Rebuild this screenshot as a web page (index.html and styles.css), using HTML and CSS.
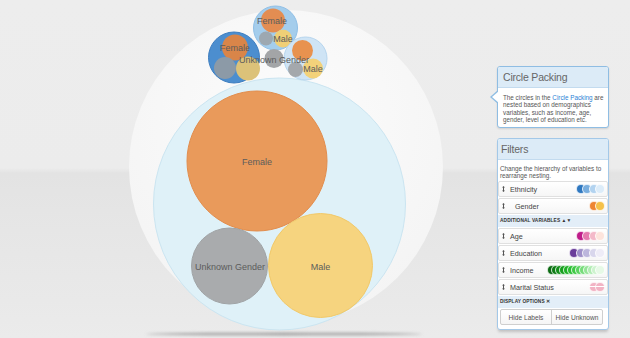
FILE: index.html
```html
<!DOCTYPE html>
<html>
<head>
<meta charset="utf-8">
<link rel="stylesheet" href="styles.css">
</head>
<body>
<div class="stage">
  <svg class="chart" width="490" height="338" viewBox="0 0 490 338">
    <defs>
      <radialGradient id="wg" cx="50%" cy="35%" r="65%">
        <stop offset="0" stop-color="#fcfcfc"/>
        <stop offset="1" stop-color="#f4f4f4"/>
      </radialGradient>
      <filter id="blur" x="-10%" y="-300%" width="120%" height="700%">
        <feGaussianBlur stdDeviation="1.4"/>
      </filter>
    </defs>
    <ellipse cx="284" cy="334" rx="138" ry="1.4" fill="#a0a0a0" filter="url(#blur)"/>
    <circle cx="286" cy="167" r="157" fill="url(#wg)"/>
    <circle cx="279.5" cy="204" r="126" fill="#dff1f8" stroke="#cbe5f1" stroke-width="1"/>
    <circle cx="257" cy="161" r="70" fill="#e99a5b" stroke="#e28d4d"/>
    <circle cx="229.5" cy="266" r="38" fill="#a9abad" stroke="#a0a3a5"/>
    <circle cx="320.5" cy="265.5" r="52" fill="#f6d47f" stroke="#f1c96a"/>

    <circle cx="234" cy="57.5" r="25.5" fill="#4c8ecf" stroke="#3d7dbf"/>
    <circle cx="235" cy="47.5" r="13" fill="#d98549"/>
    <circle cx="225" cy="68" r="11" fill="#8c9aa7"/>
    <circle cx="248" cy="68.5" r="12" fill="#dcc279"/>

    <circle cx="275.5" cy="28" r="22" fill="#a4cdec" stroke="#8fbfe6"/>
    <circle cx="273" cy="20.5" r="12" fill="#e38d52"/>
    <circle cx="266" cy="38.5" r="7" fill="#9da8b1"/>
    <circle cx="283" cy="38.5" r="9" fill="#f0cf76"/>

    <circle cx="274" cy="58.5" r="9.5" fill="#a3a5a7"/>

    <circle cx="305.5" cy="58.5" r="21.5" fill="#cfe4f5" stroke="#b6d5ee"/>
    <circle cx="302.5" cy="50.5" r="10.5" fill="#e8924f"/>
    <circle cx="295.5" cy="69.5" r="7.5" fill="#a4a8ac"/>
    <circle cx="313" cy="68.5" r="10" fill="#f3d27a"/>

    <g class="lbl">
      <text x="257" y="162">Female</text>
      <text x="230" y="267">Unknown Gender</text>
      <text x="320.5" y="267">Male</text>
      <text x="235" y="48">Female</text>
      <text x="272" y="21">Female</text>
      <text x="283" y="39">Male</text>
      <text x="274" y="60">Unknown Gender</text>
      <text x="313" y="69">Male</text>
    </g>
  </svg>

  <aside class="side">
    <div class="tip">
      <div class="tip-head">Circle Packing</div>
      <div class="tip-body">The circles in the <span class="link">Circle Packing</span> are<br>nested based on demographics<br>variables, such as income, age,<br>gender, level of education etc.</div>
    </div>

    <div class="filters">
      <div class="f-head">Filters</div>
      <div class="f-desc">Change the hierarchy of variables to<br>rearrange nesting.</div>

      <div class="row">
        <span class="grip"><svg width="3" height="6" viewBox="0 0 3 6"><path d="M1.5 0L3 1.6H0ZM1.5 6L0 4.4H3ZM1 1.5H2V4.5H1Z" fill="#555"/></svg></span>
        <span class="label">Ethnicity</span>
        <span class="sw">
          <i style="background:#2f78c0"></i><i style="background:#79aede"></i><i style="background:#b2d3f0"></i><i style="background:#dcecf9"></i>
        </span>
      </div>
      <div class="row">
        <span class="grip"><svg width="3" height="6" viewBox="0 0 3 6"><path d="M1.5 0L3 1.6H0ZM1.5 6L0 4.4H3ZM1 1.5H2V4.5H1Z" fill="#555"/></svg></span>
        <span class="label indent">Gender</span>
        <span class="sw">
          <i style="background:#ee8532"></i><i style="background:#f5c14a"></i>
        </span>
      </div>

      <div class="sec">ADDITIONAL VARIABLES ▲▼</div>

      <div class="row">
        <span class="grip"><svg width="3" height="6" viewBox="0 0 3 6"><path d="M1.5 0L3 1.6H0ZM1.5 6L0 4.4H3ZM1 1.5H2V4.5H1Z" fill="#555"/></svg></span>
        <span class="label">Age</span>
        <span class="sw">
          <i style="background:#bf1d8a"></i><i style="background:#e47aaf"></i><i style="background:#f4b9c9"></i><i style="background:#fde4dc"></i>
        </span>
      </div>
      <div class="row">
        <span class="grip"><svg width="3" height="6" viewBox="0 0 3 6"><path d="M1.5 0L3 1.6H0ZM1.5 6L0 4.4H3ZM1 1.5H2V4.5H1Z" fill="#555"/></svg></span>
        <span class="label">Education</span>
        <span class="sw">
          <i style="background:#6a3d9a"></i><i style="background:#9e8fc8"></i><i style="background:#bcb6dc"></i><i style="background:#d8d6ec"></i><i style="background:#eeecf7"></i>
        </span>
      </div>
      <div class="row">
        <span class="grip"><svg width="3" height="6" viewBox="0 0 3 6"><path d="M1.5 0L3 1.6H0ZM1.5 6L0 4.4H3ZM1 1.5H2V4.5H1Z" fill="#555"/></svg></span>
        <span class="label">Income</span>
        <span class="sw dense">
          <i style="background:#0b6a12"></i><i style="background:#0f7c16"></i><i style="background:#138e1a"></i><i style="background:#18a01f"></i><i style="background:#1fb026"></i><i style="background:#2cbe33"></i><i style="background:#40c946"></i><i style="background:#59d35e"></i><i style="background:#76dc7a"></i><i style="background:#94e497"></i><i style="background:#b1ecb3"></i><i style="background:#cdf3ce"></i><i style="background:#e6f9e6"></i>
        </span>
      </div>
      <div class="row">
        <span class="grip"><svg width="3" height="6" viewBox="0 0 3 6"><path d="M1.5 0L3 1.6H0ZM1.5 6L0 4.4H3ZM1 1.5H2V4.5H1Z" fill="#555"/></svg></span>
        <span class="label">Marital Status</span>
        <span class="sw">
          <i class="striped"></i><i class="striped"></i>
        </span>
      </div>

      <div class="sec">DISPLAY OPTIONS ✕</div>

      <div class="btns">
        <span class="btn">Hide Labels</span>
        <span class="btn">Hide Unknown</span>
      </div>
    </div>
  </aside>
</div>
</body>
</html>
```
FILE: styles.css
```css
html, body {
  margin: 0;
  padding: 0;
}
body {
  width: 630px;
  height: 338px;
  overflow: hidden;
  font-family: "Liberation Sans", Arial, sans-serif;
  background: linear-gradient(to bottom, #ededed 0, #ececec 168px, #e3e3e3 173px, #e6e6e6 230px, #e9e9e9 300px, #ebebeb 100%);
}
.stage {
  display: flex;
  align-items: flex-start;
  height: 338px;
}
.chart {
  flex: 0 0 490px;
  display: block;
}
.lbl text {
  font-family: "Liberation Sans", Arial, sans-serif;
  font-size: 9px;
  fill: #5c5c5c;
  text-anchor: middle;
  dominant-baseline: central;
}
.side {
  width: 112px;
  margin-left: 7px;
  padding-top: 66px;
  display: flex;
  flex-direction: column;
  gap: 10px;
}
.tip {
  position: relative;
  box-sizing: border-box;
  height: 62px;
  background: #fff;
  border: 1px solid #8fbde3;
  border-radius: 3px;
  box-shadow: 0 1px 2px rgba(0,0,0,0.12);
}
.tip::before {
  content: "";
  position: absolute;
  left: -8px;
  top: 23px;
  border-style: solid;
  border-width: 7px 8px 7px 0;
  border-color: transparent #8fbde3 transparent transparent;
}
.tip::after {
  content: "";
  position: absolute;
  left: -6px;
  top: 24px;
  border-style: solid;
  border-width: 6px 7px 6px 0;
  border-color: transparent #fff transparent transparent;
}
.tip-head, .f-head {
  height: 20px;
  line-height: 20px;
  background: #dcebf7;
  border-bottom: 1px solid #c3dbef;
  border-radius: 2px 2px 0 0;
  font-size: 10.5px;
  color: #666;
  padding-left: 5px;
  letter-spacing: -0.2px;
}
.f-head {
  padding-left: 3px;
}
.tip-body {
  padding: 6px 3px 3px 5px;
  font-size: 6.3px;
  line-height: 7.4px;
  color: #555;
}
.link {
  color: #2a7fd6;
}
.filters {
  box-sizing: border-box;
  background: #fff;
  border: 1px solid #a3c8e8;
  border-radius: 3px;
  padding-bottom: 4px;
  box-shadow: 0 3px 3px -1px rgba(0,0,0,0.18);
}
.f-desc {
  padding: 4.6px 3px 1.6px 2px;
  font-size: 6.3px;
  line-height: 7.4px;
  color: #555;
}
.row {
  box-sizing: border-box;
  height: 16px;
  margin: 0 0 1px 0;
  display: flex;
  align-items: center;
  border: 1px solid #e0e0e0;
  border-radius: 2px;
  background: linear-gradient(#ffffff, #f6f6f6);
  padding: 0 2px 0 3px;
}
.grip {
  display: flex;
  width: 3px;
  margin-right: 5px;
}
.label {
  font-size: 7.2px;
  color: #444;
  flex: 1;
  white-space: nowrap;
}
.label.indent {
  padding-left: 5px;
}
.sw {
  display: flex;
  align-items: center;
}
.sw i {
  display: block;
  box-sizing: border-box;
  width: 10px;
  height: 10px;
  border-radius: 50%;
  border: 0.6px solid rgba(255,255,255,0.8);
  margin-left: -3.5px;
}
.sw i:first-child {
  margin-left: 0;
}
.sw.dense i {
  margin-left: -6px;
}
.sw.dense i:first-child {
  margin-left: 0;
}
.sw i.striped {
  background: linear-gradient(#f2b3c4 0, #f2b3c4 40%, #fff 40%, #fff 56%, #f2b3c4 56%);
}
.sec {
  box-sizing: border-box;
  height: 12px;
  line-height: 12px;
  margin-bottom: 1px;
  background: #e3eef8;
  font-size: 4.8px;
  font-weight: bold;
  color: #333;
  padding-left: 2px;
  letter-spacing: 0.1px;
}
.btns {
  box-sizing: border-box;
  display: flex;
  height: 16px;
  margin: 1px 5px 0 2px;
  border: 1px solid #cfcfcf;
  border-radius: 2px;
  background: linear-gradient(#ffffff, #f5f5f5);
}
.btn {
  flex: 1;
  display: flex;
  align-items: center;
  justify-content: center;
  font-size: 6.6px;
  color: #555;
}
.btn + .btn {
  border-left: 1px solid #cfcfcf;
}
```
